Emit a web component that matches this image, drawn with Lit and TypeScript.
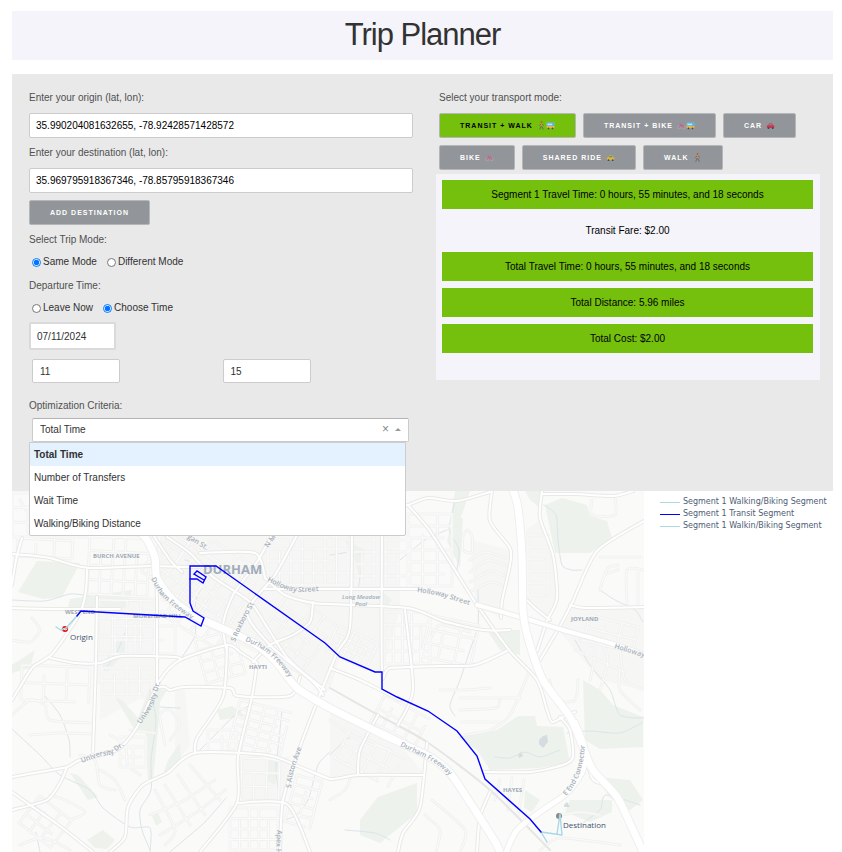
import { LitElement, html, svg, css } from "lit";
import { customElement, property, state } from "lit/decorators.js";
import { classMap } from "lit/directives/class-map.js";

type Point = [number, number];

const parse = (s: string): Point[] =>
  s.split(" ").map((p) => p.split(",").map(Number) as Point);

/** Rounded path through every point of a road or stream. */
const smooth = (s: string): string => {
  const p = parse(s);
  let d = `M${p[0][0]} ${p[0][1]}`;
  for (let i = 0; i < p.length - 1; i++) {
    const a = p[Math.max(i - 1, 0)];
    const b = p[i];
    const c = p[i + 1];
    const e = p[Math.min(i + 2, p.length - 1)];
    const k = 8;
    d += `C${b[0] + (c[0] - a[0]) / k} ${b[1] + (c[1] - a[1]) / k} ${c[0] - (e[0] - b[0]) / k} ${c[1] - (e[1] - b[1]) / k} ${c[0]} ${c[1]}`;
  }
  return d;
};

/** Street grid of a neighbourhood, turned by deg about its top left corner. */
const grid = (x: number, y: number, w: number, h: number, deg: number, cols: number, rows: number): string => {
  const r = (deg * Math.PI) / 180;
  const at = (u: number, v: number) =>
    `${(x + u * Math.cos(r) - v * Math.sin(r)).toFixed(1)} ${(y + u * Math.sin(r) + v * Math.cos(r)).toFixed(1)}`;
  let d = "";
  for (let i = 0; i <= cols; i++) {
    const cut = i % 3 === 1 ? h * 0.3 : 0;
    d += `M${at((w * i) / cols, cut)}L${at((w * i) / cols, h)}`;
  }
  for (let j = 0; j <= rows; j++) {
    const cut = j % 3 === 2 ? w * 0.2 : 0;
    d += `M${at(0, (h * j) / rows)}L${at(w - cut, (h * j) / rows)}`;
  }
  return d;
};

const DISTRICTS = [
  "160,490 330,490 345,640 330,690 230,640 160,600",
  "95,597 157,597 157,687 150,700 115,697 93,680",
  "330,530 400,530 400,610 382,672 330,655",
  "470,540 510,550 502,620 475,600",
  "573,607 644,607 644,690 600,680 560,632",
  "540,520 556,560 556,600 545,618 528,600 526,530",
  "330,704 400,745 425,775 330,779",
  "175,690 185,690 190,745 175,765",
  "240,757 290,757 285,803 238,803",
  "100,663 122,656 160,660 155,690 100,720",
];

const PARKS = [
  "18,592 37,561 80,563 62,597 43,599",
  "70,599 132,590 127,608 68,608",
  "525,491 545,491 540,508 530,500",
  "545,505 562,498 587,505 590,516 607,521 612,538 590,553 555,553",
  "453,518 463,518 460,568 447,541",
  "487,630 520,630 520,655 500,650",
  "457,737 497,730 518,716 535,716 537,726 563,727 570,763 540,768 490,770 477,750",
  "583,680 600,690 613,705 643,717 643,747 600,749 585,740",
  "360,820 378,797 417,783 417,813 380,843 360,835",
  "597,777 630,780 643,800 630,810 610,798",
  "570,800 612,800 612,812 590,822 565,812",
  "525,790 540,800 532,812 524,808",
  "115,697 122,700 138,718 150,688 167,690 160,702 158,730 153,780 148,780 146,733 136,732",
  "163,775 168,760 180,743 181,758 170,772",
  "87,840 103,830 115,840 107,849 95,848",
  "70,773 78,775 98,797 88,800",
  "217,710 232,706 246,716 220,720",
  "118,640 130,638 124,652 108,672 101,668",
  "268,757 279,760 275,785 266,780",
  "345,540 365,550 360,580 355,560",
  "152,816 158,812 162,822 156,826",
  "380,590 392,600 386,608",
  "12,665 35,650 30,668 12,673",
  "455,491 470,491 460,520 450,520",
];

const STREAMS = [
  "544,505 556,515 558,540 562,565 572,570 582,570",
  "455,500 452,515 449,530 459,550 456,575",
  "400,560 425,540 447,530",
  "185,560 210,570 196,600 195,635 180,660",
  "12,729 40,755 60,775 90,790 103,808 130,827 150,828 150,852",
  "45,696 60,715 69,740 70,757",
  "150,690 156,720 151,760 151,790 140,810 142,830 150,850",
  "160,707 180,708",
  "250,705 235,715 215,735 198,752",
  "282,710 279,740 276,770 280,800",
  "330,752 318,765 308,800 296,815 285,820",
  "226,798 205,822 190,835 170,852",
  "495,757 510,758 525,752 540,757 560,750",
  "478,590 478,625 470,650 460,680 450,705 455,716",
  "575,640 590,665 610,690 620,715 644,718",
  "600,590 615,600 635,610 643,622",
  "567,733 590,731 620,733 643,722",
  "330,555 355,552 362,560 358,590",
  "345,830 375,833 390,840",
  "330,755 345,740 350,738",
  "12,600 45,601 70,594 90,596",
  "105,670 118,650 128,625",
  "580,825 600,810 606,795 640,805",
  "36,832 40,852",
];

const ROADS = [
  "12,554 27,555 50,558 70,564 90,568 150,566 190,567 216,567",
  "22,538 16,560 12,585",
  "12,608 60,609 120,609",
  "87,570 86,590 80,613 53,653 33,667 20,687 12,700",
  "50,658 75,663 100,663 122,656 175,657 180,660",
  "97,597 96,660 93,752",
  "155,560 157,600 157,687",
  "12,777 40,772 67,767 80,760 117,750 137,727 160,680 180,660 227,645 240,652 257,663",
  "67,767 60,783 47,800 12,810",
  "12,792 30,805 60,826 93,852",
  "110,852 125,837 128,807 143,785 167,773 195,753 267,755 300,767 330,779 358,775 423,775",
  "195,753 197,738 223,697 227,645",
  "257,663 252,697 238,757 237,803 200,852",
  "237,803 287,804 310,852",
  "157,687 165,687 170,690 185,687 230,688 238,696 290,696 300,677",
  "167,537 190,553 213,577 250,602 267,627 285,655 300,670 325,690",
  "150,530 170,560 182,572",
  "272,535 257,562 233,595 223,625 227,652",
  "297,535 275,575 247,612 270,645 313,682 323,695",
  "200,553 255,553 265,578",
  "313,602 310,622 293,635 270,645 253,662",
  "265,578 285,595 313,603 330,604 408,608 443,621 483,630 510,630",
  "265,589 330,589 417,589",
  "352,530 350,627 337,653 317,702 300,747 283,800 280,852",
  "382,530 382,672 390,668 440,666 475,665 507,651",
  "405,610 413,690 398,725",
  "330,668 360,680 400,700",
  "408,505 430,531 460,578 477,605 510,651 537,680 547,710 552,722 563,717 575,712",
  "400,506 408,505 428,498 457,501 490,492",
  "492,491 490,521 510,548 510,565 502,601 501,618",
  "542,491 540,518 553,555 557,598 547,621 537,651",
  "525,598 535,608 550,620",
  "542,494 575,494 613,496 633,491",
  "644,521 597,551 573,601 560,626 540,660",
  "570,605 585,608 644,607",
  "427,743 420,807 403,833 398,852",
  "490,792 480,817 477,852",
  "483,772 530,772 563,765 573,757 570,730 560,717",
  "583,745 592,778 603,784",
  "330,779 300,767",
  "358,775 360,750 378,715",
];

const HOLLOWAY = "477,605 520,617 563,630 610,643 645,655";

const FREEWAYS = [
  "138,530 147,540 155,558 157,578 173,600 197,617 233,633 257,645 277,663 297,688 330,708 380,733 430,757 450,773 473,807 497,845 500,855",
  "513,490 518,508 522,555 523,611 528,638 543,680 570,717 583,747 593,770 617,797 633,830 644,854",
  "505,855 517,830 543,810 567,793 583,770 584,745 575,722",
];

const LANES = [
  "160,575 175,565 190,540",
  "470,560 485,552 505,558",
  "470,572 488,560 506,566",
  "470,582 490,571 504,576",
  "470,592 490,582 503,586",
  "463,536 463,550 472,552 472,536 467,530 463,536",
  "592,500 592,515 615,515 615,498",
  "600,590 605,575 618,570",
  "602,582 608,568 618,565",
  "640,557 600,557",
  "627,604 627,570 644,570",
  "638,604 638,570",
  "20,500 30,515 45,512 48,530",
  "12,640 30,642 40,630 32,618",
  "12,715 30,700 45,705 50,720 93,723",
  "30,735 60,733 93,734",
  "20,845 40,838 55,842 70,850",
  "50,795 65,800 85,812 70,820",
  "100,770 115,780 125,800",
  "110,735 125,745 128,765 140,775",
  "80,755 95,760 100,785 115,790",
  "130,730 155,733",
  "165,745 160,715 170,710 180,725 170,740",
  "155,790 175,830 165,845",
  "165,785 190,825",
  "178,775 205,815",
  "190,765 220,800",
  "150,815 185,800 215,780",
  "160,835 200,810 225,790",
  "330,720 360,740 390,750",
  "460,710 495,708 500,700",
  "462,722 500,722",
  "460,698 520,698",
  "465,735 490,730 510,715 530,670",
  "430,640 440,625 470,632",
  "440,690 465,690 490,688",
  "580,640 595,650 590,680",
  "600,640 608,660 600,690",
  "620,650 625,680 644,690",
  "575,650 625,672",
  "620,670 620,690 640,710",
  "540,850 560,838 620,845",
  "562,815 580,812 600,815",
  "500,780 495,800",
  "512,778 508,810",
  "524,780 518,815",
  "550,680 555,700 575,700 578,680",
  "432,800 465,830 460,852",
  "425,815 440,830 436,852",
  "330,800 345,790 350,779",
];

const GRIDS = [
  grid(18, 538, 55, 18, 3, 3, 1),
  grid(90, 536, 60, 58, 3, 5, 4),
  grid(12, 493, 145, 44, 0, 9, 3),
  grid(99, 600, 56, 54, 1, 4, 3),
  grid(115, 612, 60, 42, 0, 3, 3),
  grid(22, 665, 68, 35, 2, 3, 2),
  grid(102, 668, 50, 26, 0, 4, 2),
  grid(170, 530, 70, 50, 35, 6, 4),
  grid(212, 540, 60, 90, 32, 4, 6),
  grid(268, 537, 80, 48, 0, 7, 4),
  grid(290, 592, 56, 60, 36, 4, 4),
  grid(350, 540, 60, 48, 0, 5, 4),
  grid(338, 625, 44, 28, 25, 5, 3),
  grid(384, 612, 46, 52, 0, 5, 4),
  grid(408, 514, 44, 72, 0, 3, 6),
  grid(195, 640, 40, 45, -15, 3, 4),
  grid(240, 700, 52, 50, 14, 4, 6),
  grid(208, 730, 28, 22, 0, 2, 2),
  grid(242, 758, 38, 42, 2, 3, 3),
  grid(230, 808, 48, 42, 0, 5, 4),
  grid(297, 775, 26, 48, 15, 2, 5),
  grid(385, 695, 50, 30, 28, 4, 2),
  grid(350, 730, 60, 32, 28, 4, 2),
  grid(120, 737, 26, 30, 0, 2, 3),
  grid(430, 615, 50, 42, 12, 3, 3),
  grid(590, 615, 50, 26, 14, 3, 2),
  grid(528, 535, 20, 60, 0, 1, 5),
  grid(40, 796, 40, 34, 38, 3, 3),
];

const ROUTE =
  "77,616 81,611 185,617 201,626 204,618 193,611 190,603 190,566 216,566 325,643 340,657 375,672 382,672 382,689 397,697 428,711 457,731 477,756 485,779 530,819 541,832";
const ROUTE_LOOP = "190,579 197,579 203,583 206,577 197,571 194,574 204,580";

@customElement("route-map")
export class RouteMap extends LitElement {
  static styles = css`
    :host { display: block; }
    .map { display: block; width: 100%; height: auto; background: #fafaf8; font-family: "Open Sans", sans-serif; }
    .district { fill: #f6f6f5; }
    .park { fill: #edf2ed; }
    .pond { fill: #d5dce0; }
    .line { fill: none; stroke-linejoin: round; stroke-linecap: round; }
    .stream { stroke: #dce5e8; stroke-width: 1; }
    .lane-edge { stroke: #f1f1f0; stroke-width: 3; }
    .lane { stroke: #fcfcfc; stroke-width: 1; }
    .rail { stroke: #e6e6e6; stroke-width: 2; }
    .road-edge { stroke: #e9e9e8; stroke-width: 4; }
    .road { stroke: #ffffff; stroke-width: 2; }
    .main-edge { stroke: #ececea; stroke-width: 6; }
    .main { stroke: #ffffff; stroke-width: 4; }
    .freeway-edge { stroke: #efefee; stroke-width: 9; }
    .freeway { stroke: #ffffff; stroke-width: 7; }
    .connector-edge { stroke: #efefee; stroke-width: 7; }
    .connector { stroke: #ffffff; stroke-width: 5; }
    .transit { stroke: #0000ff; stroke-width: 1.4; stroke-linejoin: miter; }
    .walk { stroke: #a9d8e6; stroke-width: 1.4; }
    .street { fill: #a6b0bb; font-size: 7px; font-weight: 600; }
    .place { fill: #a0aab5; font-size: 6px; font-weight: 700; }
    .city { fill: #a1acb9; font-size: 13px; font-weight: 700; }
    .water-name { fill: #a0aebb; font-size: 6px; font-style: italic; font-weight: 600; text-anchor: middle; }
    .stop { fill: #42536f; font-size: 8px; }
  `;

  render() {
    const roads = ROADS.map(smooth).join("");
    const lanes = GRIDS.join("") + LANES.map(smooth).join("");
    const freeways = smooth(FREEWAYS[0]) + smooth(FREEWAYS[1]);
    const connector = smooth(FREEWAYS[2]);
    return html`
      <svg class="map" viewBox="12 491 632 361" role="img" aria-label="Map of Durham with the planned route">
        <defs>
          <path id="freeway-west" d=${smooth("151,579 160,594 174,607 200,625")} />
          <path id="freeway-mid" d=${smooth("245,641 260,648 277,662 292,682")} />
          <path id="freeway-east" d=${smooth("400,746 425,758 440,767 460,786")} />
          <path id="holloway-west" d=${smooth("267,581 282,588 300,592 330,590")} />
          <path id="holloway-mid" d=${smooth("417,592 440,596 478,608")} />
          <path id="holloway-east" d=${smooth("614,648 650,659")} />
          <path id="university-west" d=${smooth("82,763 100,756 112,754 130,741")} />
          <path id="university-north" d=${smooth("141,724 153,705 162,676")} />
          <path id="roxboro" d=${smooth("235,642 245,620 260,594")} />
          <path id="alston" d=${smooth("291,788 294,770 306,736")} />
          <path id="connector" d="M566 796Q586 776 585 734" />
        </defs>
        ${DISTRICTS.map((p) => svg`<polygon class="district" points=${p} />`)}
        ${PARKS.map((p) => svg`<polygon class="park" points=${p} />`)}
        <polygon class="pond" points="539,740 543,736 547,735 548,742 543,748 539,744" />
        <polygon class="pond" points="518,754 521,752 523,756 519,758" />
        <polygon class="pond" points="564,805 567,802 570,807 564,807" />
        <path class="line stream" d=${STREAMS.map(smooth).join("")} />
        <path class="line lane-edge" d=${lanes} />
        <path class="line lane" d=${lanes} />
        <path class="line rail" d=${smooth("330,688 380,716 427,742 490,790 550,850")} />
        <path class="line road-edge" d=${roads} />
        <path class="line road" d=${roads} />
        <path class="line main-edge" d=${smooth(HOLLOWAY)} />
        <path class="line main" d=${smooth(HOLLOWAY)} />
        <path class="line connector-edge" d=${connector} />
        <path class="line freeway-edge" d=${freeways} />
        <path class="line connector" d=${connector} />
        <path class="line freeway" d=${freeways} />

        <text class="place" x="93" y="558">BURCH AVENUE</text>
        <text class="place" x="65" y="614">WEST END</text>
        <text class="place" x="133" y="618">MOREHEAD HILL</text>
        <text class="place" x="249" y="669">HAYTI</text>
        <text class="place" x="571" y="621">JOYLAND</text>
        <text class="place" x="503" y="792">HAYES</text>
        <text class="city" x="203" y="574">DURHAM</text>
        <text class="water-name" x="361" y="599">Long Meadow</text>
        <text class="water-name" x="361" y="606">Pool</text>
        <text class="street" transform="translate(187 538) rotate(32)">gan St.</text>
        <text class="street" transform="translate(268 548) rotate(-55)">N M</text>
        <text class="street" transform="translate(277 830) rotate(92)">Apex H</text>
        ${[
          ["freeway-west", "Durham Freeway"],
          ["freeway-mid", "Durham Freeway"],
          ["freeway-east", "Durham Freeway"],
          ["holloway-west", "Holloway Street"],
          ["holloway-mid", "Holloway Street"],
          ["holloway-east", "Holloway"],
          ["university-west", "University Dr."],
          ["university-north", "University Dr."],
          ["roxboro", "S Roxboro St"],
          ["alston", "S Alston Ave"],
          ["connector", "E End Connector"],
        ].map(([id, name]) => svg`<text class="street"><textPath href=${"#" + id}>${name}</textPath></text>`)}

        <circle cx="65" cy="629" r="3" fill="#ee1111" />
        <path class="line" d="M63 628l2 2 2-1" stroke="#ffffff" />
        <circle cx="559" cy="816" r="3" fill="#8a8a8a" />
        <polyline class="line walk" points="77,616 66,628 61,630 56,627" />
        <polyline class="line walk" points="547,842 541,832 562,835 560,814 557,834" />
        <polyline class="line transit" points=${ROUTE} />
        <polyline class="line transit" points=${ROUTE_LOOP} />
        <text class="stop" x="70" y="640">Origin</text>
        <text class="stop" x="563" y="828">Destination</text>
      </svg>
    `;
  }
}

const walker = svg`
  <circle cx="4" cy="1" r="1" fill="#b5652d" />
  <path d="M4 2.2L3.8 5" stroke="#e08a3c" stroke-width="1.8" fill="none" />
  <path d="M3.8 5L2.2 8.6M4 5L5.8 8.6M3.4 3L1.8 4.8M4.6 3L6.2 4.4" stroke="#5d6675" stroke-width="0.9" fill="none" />`;
const bus = svg`
  <rect x="0" y="1.6" width="8" height="5.6" rx="0.8" fill="#e9b44a" />
  <rect x="0" y="1.6" width="8" height="3.4" rx="0.8" fill="#4bb4e6" />
  <rect x="0.8" y="2.6" width="5" height="1.6" fill="#bfe9fb" />
  <circle cx="2" cy="7.4" r="0.9" fill="#4a4a4a" /><circle cx="6" cy="7.4" r="0.9" fill="#4a4a4a" />`;
const bike = svg`
  <circle cx="1.8" cy="6.4" r="1.5" fill="none" stroke="#b9a5b4" stroke-width="0.7" />
  <circle cx="6.2" cy="6.4" r="1.5" fill="none" stroke="#b9a5b4" stroke-width="0.7" />
  <path d="M1.8 6.4L3 4H5.4L6.2 6.4M3 4L4.2 6.4L5.4 4M2.2 3H3.4" fill="none" stroke="#c65a86" stroke-width="0.8" />`;
const car = (body: string, glass: string) => svg`
  <path d="M1.6 4.4L2.6 2.4H5.6L6.6 4.4Z" fill=${body} />
  <rect x="0.4" y="4.2" width="7.4" height="2.8" rx="0.8" fill=${body} />
  <path d="M2.3 4.2L3 3H5.2L5.9 4.2Z" fill=${glass} />
  <circle cx="2" cy="7.2" r="0.9" fill="#3f4a5a" /><circle cx="6.2" cy="7.2" r="0.9" fill="#3f4a5a" />`;

const MODES = [
  { name: "Transit + Walk", icons: [walker, bus] },
  { name: "Transit + Bike", icons: [bike, bus] },
  { name: "Car", icons: [car("#d2353f", "#5b8fd0")] },
  { name: "Bike", icons: [bike] },
  { name: "Shared Ride", icons: [car("#e2b33c", "#4d9a6a")] },
  { name: "Walk", icons: [walker] },
];

const CRITERIA = ["Total Time", "Number of Transfers", "Wait Time", "Walking/Biking Distance"];

const RESULTS = [
  { text: "Segment 1 Travel Time: 0 hours, 55 minutes, and 18 seconds", bar: true },
  { text: "Transit Fare: $2.00", bar: false },
  { text: "Total Travel Time: 0 hours, 55 minutes, and 18 seconds", bar: true },
  { text: "Total Distance: 5.96 miles", bar: true },
  { text: "Total Cost: $2.00", bar: true },
];

const LEGEND = [
  { text: "Segment 1 Walking/Biking Segment", kind: "walk" },
  { text: "Segment 1 Transit Segment", kind: "transit" },
  { text: "Segment 1 Walkin/Biking Segment", kind: "walk" },
];

@customElement("app-root")
export class AppRoot extends LitElement {
  @property() heading = "Trip Planner";
  @state() private mode = "Transit + Walk";
  @state() private criterion = "Total Time";
  @state() private open = true;

  static styles = css`
    :host {
      display: block;
      padding: 11px 9px 0 12px;
      background: #ffffff;
      color: #323232;
      font: 10px/14px "Liberation Sans", Arial, sans-serif;
    }
    * { box-sizing: border-box; }
    .title {
      margin: 0 0 14px;
      padding: 6px 0 7px;
      background: #f4f4fa;
      font-size: 31px;
      font-weight: 400;
      line-height: 36px;
      letter-spacing: -1px;
      text-align: center;
    }
    .panel {
      display: grid;
      grid-template-columns: 1fr 1fr;
      gap: 23px;
      padding: 17px 13px 49px 17px;
      background: #e9e9e9;
    }
    .label { display: block; color: #505050; }
    .field {
      display: block;
      height: 25px;
      padding: 0 7px;
      border: 1px solid #cccccc;
      border-radius: 2px;
      background: #ffffff;
      color: inherit;
      font: inherit;
    }
    .wide { width: 100%; margin: 8px 0; padding: 0 6px; color: #000000; }
    .wide.last { margin-bottom: 7px; }
    .button {
      display: inline-flex;
      align-items: center;
      height: 25px;
      padding: 0 20px;
      border: 1px solid #b5b6b8;
      border-radius: 2px;
      background: #929599;
      color: #ffffff;
      font: bold 7px/14px "Liberation Sans", Arial, sans-serif;
      letter-spacing: 1px;
      text-transform: uppercase;
      white-space: nowrap;
    }
    .button.on { background: #74c00c; color: #000000; }
    .name { margin-right: 4px; }
    .icon { width: 9px; height: 9px; }
    .radios { display: flex; gap: 10px; margin: 0; padding: 0 0 0 3px; border: 0; }
    .group { min-width: 0; margin: 8px 0 10px; padding: 0; border: 0; }
    .group.tight { margin-bottom: 7px; }
    .group .label { margin-bottom: 8px; padding: 0; }
    .choice { display: flex; align-items: center; gap: 2px; }
    .radio { width: 9px; height: 9px; margin: 0; }
    .date { width: 87px; height: 28px; border-width: 2px; padding: 0 6px; border-color: #dadada; }
    .time { display: grid; grid-template-columns: 1fr 1fr; margin: 9px 0 16px 3px; }
    .short { width: 88px; height: 24px; }
    .combo { position: relative; margin-top: 5px; }
    .control { position: relative; margin: 0 4px 0 3px; }
    .select { width: 100%; height: 24px; appearance: none; border-top-color: #b3b3b3; }
    .tools { position: absolute; top: 0; right: 8px; display: flex; align-items: center; gap: 6px; height: 22px; }
    .clear { padding: 0; border: 0; background: none; color: #888888; font: 12px/12px "Liberation Sans", Arial, sans-serif; }
    .caret { border: 3px solid transparent; border-top: 0; border-bottom-color: #999999; }
    .menu {
      position: absolute;
      z-index: 2;
      top: 24px;
      left: 0;
      right: 7px;
      margin: 0;
      padding: 0;
      list-style: none;
      border: 1px solid #cccccc;
      border-radius: 0 0 2px 2px;
      background: #ffffff;
    }
    .option { padding: 0 4px; line-height: 23px; }
    .option.on { background: #e4f1fe; font-weight: 700; }
    .modes { padding-left: 3px; }
    .mode-list { display: flex; flex-wrap: wrap; gap: 7px; margin: 8px 0 4px; }
    .results { display: grid; gap: 7px; padding: 6px 7px 27px 6px; background: #f4f4fa; color: #000000; text-align: center; }
    .result { margin: 0; line-height: 29px; }
    .result.bar { background: #74c00c; }
    .bottom { display: flex; align-items: flex-start; }
    .route { flex: 1; min-width: 0; }
    .legend { width: 189px; margin: 0; padding: 5px 0 0 16px; list-style: none; color: #4d5c75; font: 8px/12px "DejaVu Sans", Verdana, sans-serif; white-space: nowrap; }
    .entry { display: flex; align-items: center; gap: 3px; }
    .key { width: 20px; border-top: 1px solid #add8e6; }
    .key.transit { border-color: #0000ff; }
  `;

  private choice(group: string, text: string, checked: boolean) {
    return html`<label class="choice"><input class="radio" type="radio" name=${group} .checked=${checked} />${text}</label>`;
  }

  private pick(name: string) {
    this.criterion = name;
    this.open = false;
  }

  render() {
    return html`
      <h1 class="title">${this.heading}</h1>
      <main>
        <div class="panel">
          <form>
            <label class="label" for="origin">Enter your origin (lat, lon):</label>
            <input class="field wide" id="origin" value="35.990204081632655, -78.92428571428572" />
            <label class="label" for="destination">Enter your destination (lat, lon):</label>
            <input class="field wide last" id="destination" value="35.969795918367346, -78.85795918367346" />
            <button class="button" type="button">Add destination</button>
            <fieldset class="group">
              <legend class="label">Select Trip Mode:</legend>
              <div class="radios">
                ${this.choice("trip", "Same Mode", true)} ${this.choice("trip", "Different Mode", false)}
              </div>
            </fieldset>
            <fieldset class="group tight">
              <legend class="label">Departure Time:</legend>
              <div class="radios">
                ${this.choice("leave", "Leave Now", false)} ${this.choice("leave", "Choose Time", true)}
              </div>
            </fieldset>
            <input class="field date" aria-label="Date" value="07/11/2024" />
            <div class="time">
              <input class="field short" aria-label="Hour" value="11" />
              <input class="field short" aria-label="Minute" value="15" />
            </div>
            <label class="label" for="criterion">Optimization Criteria:</label>
            <div class="combo">
              <div class="control">
                <select
                  class="field select"
                  id="criterion"
                  @mousedown=${(e: Event) => {
                    e.preventDefault();
                    this.open = !this.open;
                  }}
                >
                  ${CRITERIA.map((c) => html`<option ?selected=${c === this.criterion}>${c}</option>`)}
                </select>
                <div class="tools">
                  <button class="clear" type="button" aria-label="Clear">×</button>
                  <span class="caret"></span>
                </div>
              </div>
              ${this.open
                ? html`<ul class="menu" role="listbox" aria-label="Optimization Criteria">
                    ${CRITERIA.map(
                      (c) => html`<li
                        class=${classMap({ option: true, on: c === this.criterion })}
                        role="option"
                        aria-selected=${c === this.criterion}
                        @click=${() => this.pick(c)}
                      >${c}</li>`
                    )}
                  </ul>`
                : ""}
            </div>
          </form>
          <section>
            <div class="modes">
              <span class="label" id="mode-label">Select your transport mode:</span>
              <div class="mode-list" role="group" aria-labelledby="mode-label">
                ${MODES.map(
                  (m) => html`<button
                    type="button"
                    class=${classMap({ button: true, on: m.name === this.mode })}
                    @click=${() => (this.mode = m.name)}
                  ><span class="name">${m.name}</span>${m.icons.map(
                    (i) => html`<svg class="icon" viewBox="0 0 8 9" aria-hidden="true">${i}</svg>`
                  )}</button>`
                )}
              </div>
            </div>
            <div class="results">
              ${RESULTS.map((r) => html`<p class=${classMap({ result: true, bar: r.bar })}>${r.text}</p>`)}
            </div>
          </section>
        </div>
        <div class="bottom">
          <route-map class="route"></route-map>
          <ul class="legend">
            ${LEGEND.map(
              (l) => html`<li class="entry"><span class=${classMap({ key: true, transit: l.kind === "transit" })}></span>${l.text}</li>`
            )}
          </ul>
        </div>
      </main>
    `;
  }
}
